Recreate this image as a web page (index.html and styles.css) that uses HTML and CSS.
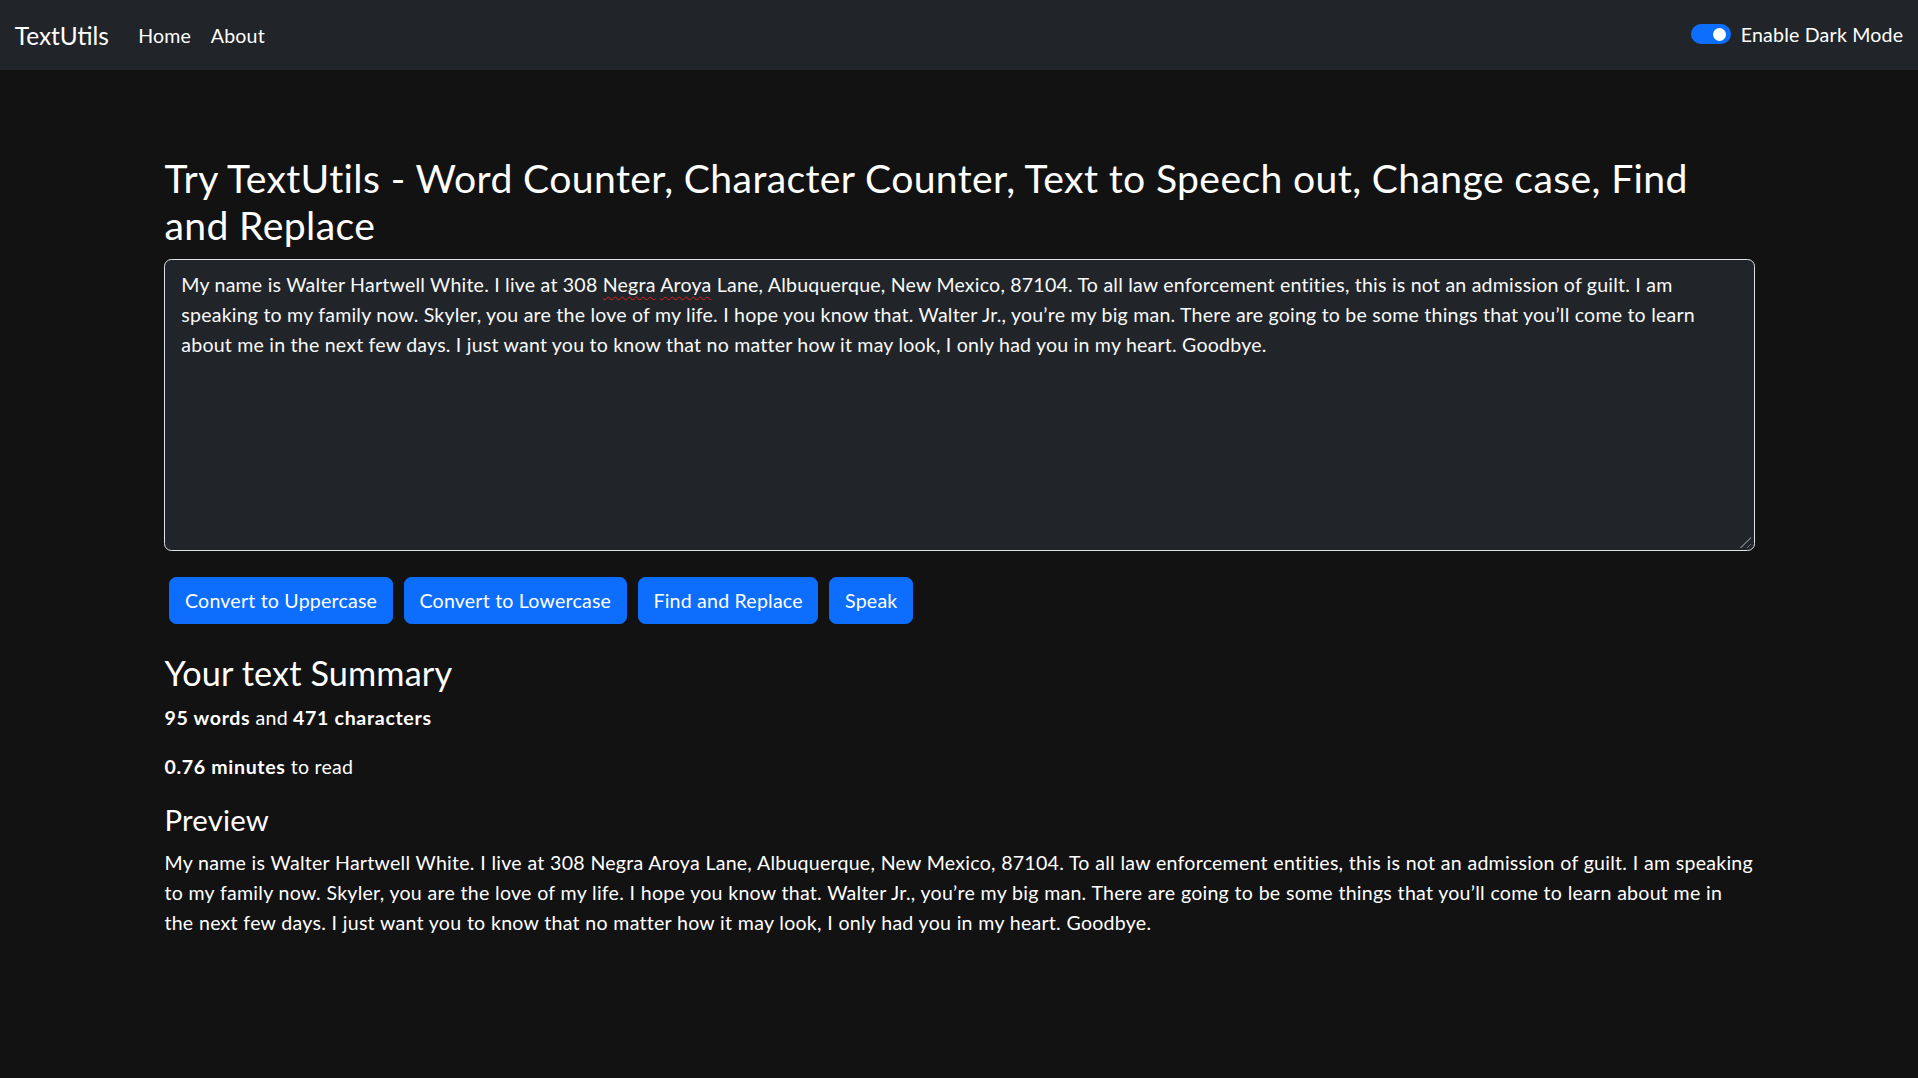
FILE: index.html
```html
<!DOCTYPE html>
<html lang="en">
<head>
<meta charset="utf-8">
<title>TextUtils</title>
<link rel="stylesheet" href="styles.css">
</head>
<body>
<nav class="navbar">
  <div class="nav-left">
    <a class="brand" href="#">TextUtils</a>
    <ul class="nav-links">
      <li><a href="#">Home</a></li>
      <li><a href="#">About</a></li>
    </ul>
  </div>
  <label class="switch">
    <span class="switch-track"><span class="switch-knob"></span></span>
    <span class="switch-label">Enable Dark Mode</span>
  </label>
</nav>

<main class="container">
  <h1 class="title">Try TextUtils - Word Counter, Character Counter, Text to Speech out, Change case, Find and Replace</h1>
  <div class="textbox">My name is Walter Hartwell White. I live at 308 <span class="spell">Negra</span> <span class="spell">Aroya</span> Lane, Albuquerque, New Mexico, 87104. To all law enforcement entities, this is not an admission of guilt. I am speaking to my family now. Skyler, you are the love of my life. I hope you know that. Walter Jr., you’re my big man. There are going to be some things that you’ll come to learn about me in the next few days. I just want you to know that no matter how it may look, I only had you in my heart. Goodbye.<span class="grip"></span></div>
  <div class="actions">
    <button class="btn">Convert to Uppercase</button>
    <button class="btn">Convert to Lowercase</button>
    <button class="btn">Find and Replace</button>
    <button class="btn">Speak</button>
  </div>

  <section class="summary">
    <h2 class="sub">Your text Summary</h2>
    <p class="para"><b>95 words</b> and <b>471 characters</b></p>
    <p class="para"><b>0.76 minutes</b> to read</p>
    <h3 class="sub-sm">Preview</h3>
    <p class="para preview">My name is Walter Hartwell White. I live at 308 Negra Aroya Lane, Albuquerque, New Mexico, 87104. To all law enforcement entities, this is not an admission of guilt. I am speaking to my family now. Skyler, you are the love of my life. I hope you know that. Walter Jr., you’re my big man. There are going to be some things that you’ll come to learn about me in the next few days. I just want you to know that no matter how it may look, I only had you in my heart. Goodbye.</p>
  </section>
</main>
</body>
</html>
```

FILE: styles.css
```css
html {
  zoom: 1.2233;
}

* {
  box-sizing: border-box;
}

body {
  margin: 0;
  background: #121212;
  color: #ffffff;
  font-family: "Lato", "Open Sans", "Noto Sans", sans-serif;
  font-size: 16px;
  line-height: 1.5;
  letter-spacing: 0.17px;
}

.navbar {
  display: flex;
  align-items: center;
  justify-content: space-between;
  height: 57px;
  padding: 0 12px;
  background: #212529;
}

.nav-left {
  display: flex;
  align-items: center;
  padding-top: 2px;
}

.brand {
  color: #ffffff;
  text-decoration: none;
  font-size: 20px;
  line-height: 30px;
  margin-right: 16px;
  letter-spacing: 0;
}

.nav-links {
  display: flex;
  list-style: none;
  margin: 0;
  padding: 0;
}

.nav-links a {
  display: block;
  padding: 8px;
  color: #ffffff;
  text-decoration: none;
  line-height: 24px;
}

.switch {
  display: flex;
  align-items: center;
  gap: 8px;
  margin-top: -1px;
}

.switch-track {
  position: relative;
  display: block;
  width: 33px;
  height: 16px;
  border-radius: 16px;
  background: #0d6efd;
}

.switch-knob {
  position: absolute;
  right: 4px;
  top: 2.5px;
  width: 11px;
  height: 11px;
  border-radius: 50%;
  background: #ffffff;
}

.switch-label {
  color: #ffffff;
  line-height: 24px;
}

.container {
  max-width: 1325px;
  margin: 0 auto;
  padding: 70px 12px 0 13px;
}

.title {
  margin: 0 0 8px;
  font-size: 32px;
  font-weight: 400;
  line-height: 1.2;
  letter-spacing: 0.3px;
}

.textbox {
  position: relative;
  height: 239px;
  padding: 8px 12px 6px 13px;
  border: 1px solid #dee2e6;
  border-radius: 6px;
  background: #212529;
  color: #f8f9fa;
  line-height: 24.5px;
}

.spell {
  text-decoration: underline wavy #e02020;
  text-decoration-thickness: 1px;
  text-underline-offset: 3px;
  text-decoration-skip-ink: none;
}

.grip {
  position: absolute;
  right: 2px;
  bottom: 2px;
  width: 12px;
  height: 12px;
  background: repeating-linear-gradient(135deg, transparent 0 2px, #6c6f75 2px 3px, transparent 3px 4px);
  clip-path: polygon(100% 0, 100% 100%, 0 100%);
}

.actions {
  display: flex;
  gap: 9px;
  margin-top: 21px;
  padding-left: 4px;
}

.btn {
  height: 38px;
  padding: 6px 12px;
  border: 1px solid #0d6efd;
  border-radius: 6px;
  background: #0d6efd;
  color: #ffffff;
  font: inherit;
  letter-spacing: inherit;
  line-height: 24px;
}

.summary {
  margin-top: 23px;
}

.sub {
  margin: 0 0 8px;
  font-size: 28px;
  font-weight: 400;
  line-height: 1.2;
  letter-spacing: 0.1px;
}

.sub-sm {
  margin: 0 0 9px;
  padding-top: 1px;
  font-size: 24px;
  font-weight: 400;
  line-height: 1.2;
}

.para {
  margin: 0 0 16px;
}

.preview {
  line-height: 24.5px;
  letter-spacing: 0.2px;
  word-spacing: 0.23px;
}

.para b {
  font-weight: 700;
  letter-spacing: 0.55px;
}
```
